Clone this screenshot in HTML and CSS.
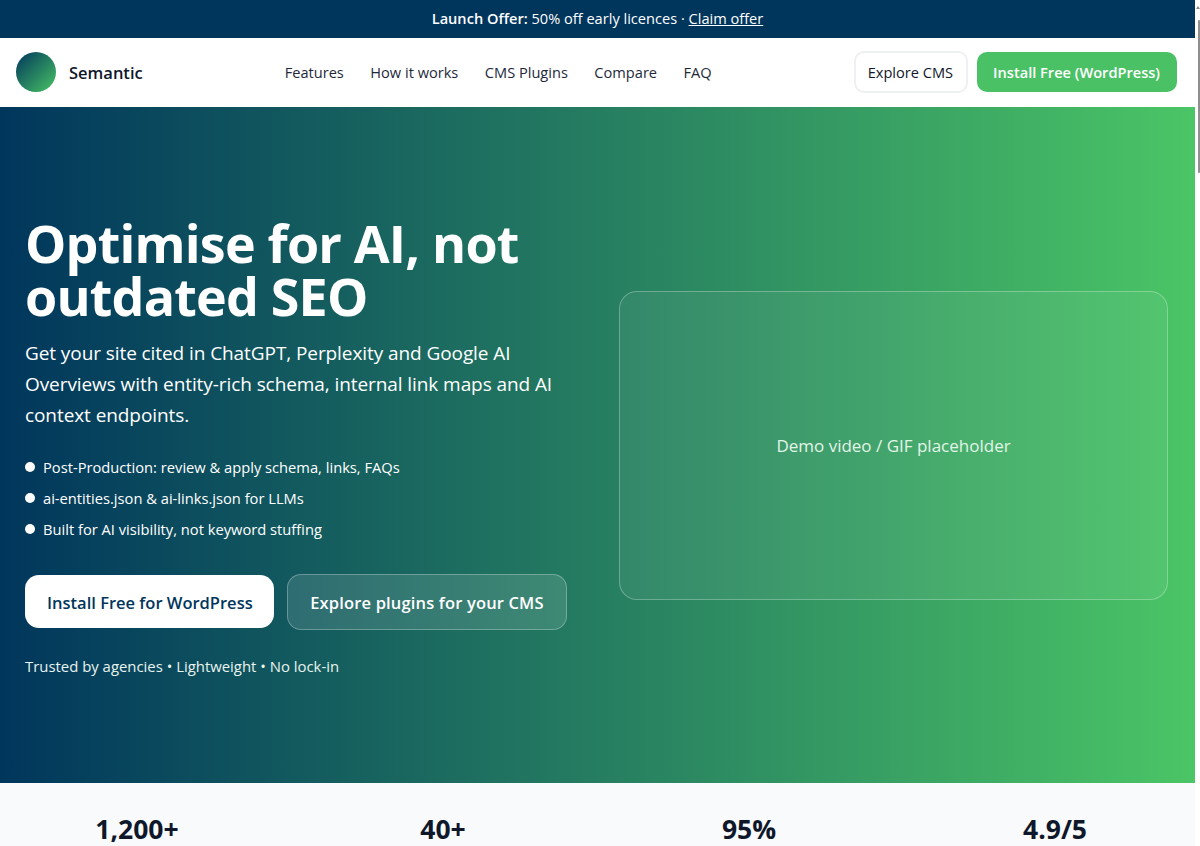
FILE: index.html
```html
<!DOCTYPE html>
<html lang="en">
<head>
<meta charset="utf-8">
<title>Semantic</title>
<link rel="stylesheet" href="styles.css">
</head>
<body>
<div class="page">
  <div class="announce"><strong>Launch Offer:</strong> 50% off early licences · <a href="#">Claim offer</a></div>
  <header class="topbar">
    <a class="brand" href="#"><span class="logo"></span><span class="brand-name">Semantic</span></a>
    <nav class="nav">
      <a href="#">Features</a>
      <a href="#">How it works</a>
      <a href="#">CMS Plugins</a>
      <a href="#">Compare</a>
      <a href="#">FAQ</a>
    </nav>
    <div class="actions">
      <a class="btn btn-outline" href="#">Explore CMS</a>
      <a class="btn btn-green" href="#">Install Free (WordPress)</a>
    </div>
  </header>
  <section class="hero">
    <div class="hero-copy">
      <h1>Optimise for AI, not outdated SEO</h1>
      <p class="lead">Get your site cited in ChatGPT, Perplexity and Google AI Overviews with entity-rich schema, internal link maps and AI context endpoints.</p>
      <ul class="bullets">
        <li>Post-Production: review &amp; apply schema, links, FAQs</li>
        <li>ai-entities.json &amp; ai-links.json for LLMs</li>
        <li>Built for AI visibility, not keyword stuffing</li>
      </ul>
      <div class="cta">
        <a class="cta-btn cta-white" href="#">Install Free for WordPress</a>
        <a class="cta-btn cta-ghost" href="#">Explore plugins for your CMS</a>
      </div>
      <p class="trust">Trusted by agencies • Lightweight • No lock-in</p>
    </div>
    <div class="demo">Demo video / GIF placeholder</div>
  </section>
  <section class="stats">
    <div class="stat">1,200+</div>
    <div class="stat">40+</div>
    <div class="stat">95%</div>
    <div class="stat">4.9/5</div>
  </section>
</div>
<div class="scrollbar"><span class="arrow"></span><span class="thumb"></span></div>
</body>
</html>
```
FILE: styles.css
```css
* { box-sizing: border-box; }
html, body { margin: 0; height: 100%; overflow: hidden; }
body { font-family: "Open Sans", "Noto Sans", sans-serif; color: #0f172a; background: #fff; display: flex; }
a { color: inherit; text-decoration: none; }
.page { flex: 1; min-width: 0; height: 846px; overflow: hidden; }
.announce { height: 38px; line-height: 36px; background: #00365c; color: #fff; font-size: 14.6px; text-align: center; }
.announce strong { font-weight: 600; }
.announce a { text-decoration: underline; }
.topbar { height: 69px; display: flex; align-items: center; justify-content: space-between; padding: 0 18px 1px 16px; background: #fff; }
.brand { display: flex; align-items: center; gap: 13px; }
.logo { width: 40px; height: 40px; border-radius: 50%; background: linear-gradient(135deg, #00365c, #48c464); }
.brand-name { font-size: 16.5px; font-weight: 600; }
.nav { display: flex; gap: 26.5px; font-size: 14.6px; line-height: 20px; padding-bottom: 1px; color: #1e293b; }
.actions { display: flex; gap: 9px; align-items: center; }
.btn { border-radius: 10px; display: flex; align-items: center; font-size: 14.6px; }
.btn-outline { height: 42px; padding: 0 13px 0 12px; border: 2px solid #eef0f3; }
.btn-green { height: 40px; background: #4bc166; color: #fff; font-weight: 600; padding: 0 17px 0 16px; }
.hero { height: 676px; background: linear-gradient(90deg, #00365c, #4bc566); color: #fff; display: grid; grid-template-columns: 569px 549px; gap: 25px; padding: 0 25px; align-items: start; }
.hero-copy { padding-top: 109px; }
h1 { margin: 0; font-size: 52px; line-height: 53px; font-weight: 700; letter-spacing: -0.8px; }
.lead { margin: 16px 0 0; font-size: 19px; line-height: 31px; letter-spacing: -0.08px; }
.bullets { list-style: none; margin: 20px 0 0; padding: 0; font-size: 14.7px; }
.bullets li { height: 31px; display: flex; align-items: center; gap: 8px; }
.bullets li::before { content: ""; width: 10px; height: 10px; border-radius: 50%; background: #fff; }
.cta { display: flex; gap: 13px; margin-top: 30px; align-items: flex-start; }
.cta-btn { border-radius: 14px; display: flex; align-items: center; font-size: 16.5px; font-weight: 600; }
.cta-white { background: #fff; color: #00365c; height: 53px; margin-top: 1px; padding: 1px 21.5px 0 22px; }
.cta-ghost { background: rgba(255,255,255,.12); border: 1px solid rgba(255,255,255,.28); height: 56px; padding: 0 22px; letter-spacing: .16px; }
.trust { margin: 26px 0 0; font-size: 14.9px; color: #e8f3ee; }
.demo { margin-top: 184px; height: 309px; border-radius: 18px; border: 1px solid rgba(255,255,255,.28); background: rgba(255,255,255,.06); display: flex; align-items: center; justify-content: center; font-size: 17px; color: #e2f5e8; }
.stats { background: #f8fafc; height: 63px; display: grid; grid-template-columns: repeat(4, 224px); column-gap: 82px; padding: 0 25px; }
.stat { text-align: center; font-size: 26.5px; font-weight: 700; padding-top: 28px; line-height: 36px; }
.scrollbar { width: 5px; background: #fff; flex: none; padding-top: 6px; }
.arrow { display: block; width: 0; height: 0; margin: 0 0 11px 1px; border-left: 2px solid transparent; border-right: 2px solid transparent; border-bottom: 3px solid #8a8a8a; }
.thumb { display: block; width: 2px; margin-left: 3px; height: 153px; background: #8f8f8f; border-radius: 1px; }
```
